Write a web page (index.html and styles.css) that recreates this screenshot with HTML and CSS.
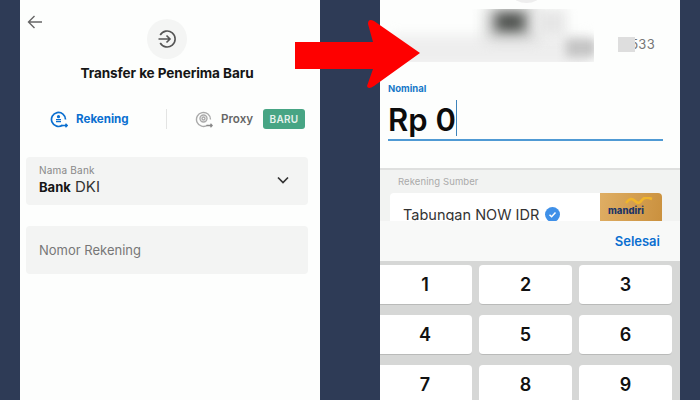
FILE: index.html
```html
<!DOCTYPE html>
<html lang="id">
<head>
<meta charset="utf-8">
<title>Transfer ke Penerima Baru</title>
<link rel="stylesheet" href="styles.css">
</head>
<body>
<main class="stage">
  <section class="phone left">
    <header class="top">
      <svg class="back" width="16" height="14" viewBox="0 0 16 14"><path d="M15 7H1.500M7.500 1 1.500 7l6 6" fill="none" stroke="#666" stroke-width="1.400"/></svg>
      <div class="round">
        <svg width="20" height="20" viewBox="0 0 20 20" fill="none" stroke="#555" stroke-width="1.600"><path d="M3.200 6A8 8 0 1 1 3.200 14"/><path d="M1.500 10H13M9.500 6.500 13 10l-3.500 3.500"/></svg>
      </div>
      <h1 class="title">Transfer ke Penerima Baru</h1>
    </header>
    <nav class="tabs">
      <div class="tab active">
        <svg width="18" height="18" viewBox="0 0 18 18" fill="none" stroke="#0a6fd0" stroke-width="1.700"><path d="M12.500 15.200A7 7 0 1 1 15.500 9.500"/><path d="M6 11.700h5M6 9.700h5" stroke-width="1.300"/><circle cx="8.500" cy="6.700" r="1.600" fill="#0a6fd0" stroke="none"/><path d="M11.500 15.500h5.500M15.500 13.800 17.200 15.500l-1.700 1.700" stroke-width="1.400"/></svg>
        <span>Rekening</span>
      </div>
      <span class="divider"></span>
      <div class="tab muted">
        <svg width="18" height="18" viewBox="0 0 18 18" fill="none" stroke="#aaa" stroke-width="1.400"><path d="M12.500 15.200A7 7 0 1 1 15.500 9.500"/><circle cx="8.500" cy="8.500" r="3.500"/><circle cx="8.500" cy="8.500" r="1.500"/><path d="M11.500 15.500h5.500M15.500 13.800 17.200 15.500l-1.700 1.700" stroke="#888" stroke-width="1.300"/></svg>
        <span>Proxy</span>
        <b class="badge">BARU</b>
      </div>
    </nav>
    <div class="field select">
      <div>
        <div class="field-label">Nama Bank</div>
        <div class="field-value"><strong>Bank</strong> DKI</div>
      </div>
      <svg width="12" height="8" viewBox="0 0 12 8"><path d="M1 1.500 6 6.500l5-5" fill="none" stroke="#333" stroke-width="1.700"/></svg>
    </div>
    <div class="field input">Nomor Rekening</div>
  </section>

  <section class="phone right">
    <div class="account"><span class="acc-no">533</span></div>
    <div class="amount">
      <div class="amount-label">Nominal</div>
      <div class="amount-value"><span>Rp 0</span><i class="caret"></i></div>
    </div>
    <div class="source">
      <div class="source-label">Rekening Sumber</div>
      <div class="card">
        <div class="card-name">Tabungan NOW IDR
          <svg width="15" height="15" viewBox="0 0 15 15"><circle cx="7.500" cy="7.500" r="7.500" fill="#3f90e8"/><path d="M4.500 7.700 6.600 9.700 10.500 5.500" fill="none" stroke="#fff" stroke-width="1.500"/></svg>
        </div>
        <div class="card-thumb">
          <svg class="wave" width="28" height="8" viewBox="0 0 28 8"><path d="M1 6c4-5 6-5 9-2s5 2 7-1 5-3 10-1" fill="none" stroke="#f0b52c" stroke-width="2.500"/></svg>
          <span>mandiri</span>
        </div>
      </div>
    </div>
    <div class="toolbar"><span>Selesai</span></div>
    <div class="keys">
      <div class="key">1</div><div class="key">2</div><div class="key">3</div>
      <div class="key">4</div><div class="key">5</div><div class="key">6</div>
      <div class="key">7</div><div class="key">8</div><div class="key">9</div>
    </div>
    <div class="notch"></div>
    <div class="smudge">
      <div class="blur blur-band"></div>
      <div class="blur blur-mid"></div>
      <div class="blur blur-dark"></div>
      <div class="blur blur-light"></div>
      <div class="blur blur-blob"></div>
    </div>
    <div class="patch"></div>
  </section>

  <svg class="arrow" width="125" height="70" viewBox="0 0 125 70"><path d="M0 22H78L73 4Q73 -2 79 1L125 33 79 66Q73 70 72 66L78 49H0Z" fill="#fe0000"/></svg>
</main>
</body>
</html>
```

FILE: styles.css
```css
* { box-sizing: border-box; }
html, body { margin: 0; height: 100%; }
body { background: #2e3b56; font-family: Inter, "Liberation Sans", sans-serif; overflow: hidden; }
.stage { position: relative; width: 700px; height: 400px; display: flex; padding: 0 20px; gap: 60px; }
.phone { width: 300px; height: 400px; background: #fdfefd; overflow: hidden; position: relative; flex: none; }

.left { display: flex; flex-direction: column; padding: 0 12px 0 6px; }
.top { position: relative; display: flex; flex-direction: column; align-items: center; padding: 19px 0 0 0; }
.back { position: absolute; left: 1px; top: 15px; }
.round { width: 40px; height: 40px; border-radius: 50%; background: #f4f5f4; display: flex; align-items: center; justify-content: center; }
.title { margin: 6px 0 0; font-size: 13.600px; line-height: 16px; font-weight: 700; color: #161616; letter-spacing: -0.100px; }
.tabs { display: flex; align-items: center; margin-top: 26px; height: 24px; padding-left: 24px; }
.tab { display: flex; align-items: center; font-size: 11.600px; font-weight: 700; }
.tab svg { margin-right: 8px; }
.active { color: #0a6fd0; width: 116px; flex: none; }
.divider { width: 1px; height: 20px; background: #e3e4e3; margin-right: 28px; flex: none; }
.muted { color: #666; font-weight: 600; }
.badge { margin-left: 10px; background: #47a584; color: #e4f2ec; font-size: 10px; font-weight: 600; letter-spacing: 0.300px; width: 42px; height: 20px; border-radius: 3px; display: flex; align-items: center; justify-content: center; }
.field { background: #f3f4f3; border-radius: 4px; flex: none; }
.select { margin-top: 26px; height: 48px; padding: 7px 19px 0 13px; display: flex; justify-content: space-between; align-items: flex-start; }
.select svg { margin-top: 12px; }
.field-label { font-size: 10px; line-height: 12px; color: #888; letter-spacing: 0.200px; }
.field-value { font-size: 15px; line-height: 20px; color: #333; margin-top: 1px; }
.field-value strong { font-size: 13px; color: #151515; }
.input { margin-top: 21px; height: 48px; padding-left: 13px; display: flex; align-items: center; font-size: 13px; color: #777; }

.right { display: flex; flex-direction: column; }
.right > * { flex: none; }
.account { height: 83px; display: flex; justify-content: flex-end; align-items: flex-start; padding: 36px 25px 0 0; }
.acc-no { font-size: 13px; line-height: 16px; color: #777; letter-spacing: 0.300px; }
.amount { height: 85px; padding: 0 17px 0 8px; }
.amount-label { font-size: 9.500px; line-height: 12px; font-weight: 700; color: #1778c8; }
.amount-value { display: flex; align-items: center; height: 41px; margin-top: 5px; border-bottom: 2px solid #4f9ad4; font-size: 31px; font-weight: 600; color: #0c0c0c; }
.amount-value span { line-height: 36px; margin-top: 1px; }
.caret { display: block; width: 1.500px; height: 36px; margin-top: -3px; background: #3e84bb; }
.source { height: 53px; background: #f2f3f2; border-top: 2px solid #dfe0df; padding: 6px 18px 0 10px; overflow: hidden; }
.source-label { font-size: 9.500px; line-height: 12px; color: #aaa; letter-spacing: 0.100px; margin-left: 8px; }
.card { margin-top: 5px; height: 50px; background: #fff; border-radius: 4px; display: flex; justify-content: space-between; }
.card-name { padding: 13px 0 0 13px; font-size: 14.500px; line-height: 18px; color: #333; display: flex; align-items: flex-start; gap: 6px; }
.card-name svg { margin-top: 1px; }
.card-thumb { position: relative; width: 62px; background: linear-gradient(100deg, #dfae64, #c98f3c); border-radius: 0 4px 4px 0; padding: 11px 0 0 8px; font-size: 9.500px; line-height: 13px; font-weight: 800; color: #1d3566; }
.wave { position: absolute; left: 25px; top: 4px; }
.toolbar { height: 40px; background: #f8f9f8; display: flex; align-items: center; justify-content: flex-end; padding: 0 20px 0 0; color: #0a6fd0; font-size: 13px; font-weight: 600; position: relative; }
.keys { flex: 1 0 auto; height: 139px; width: 310px; background: #d6d7d6; display: grid; grid-template-columns: 102px 93px 93px; grid-auto-rows: 40px; gap: 10px 7px; padding: 4px 8px 0 0; margin-left: -10px; }
.key { background: #fff; border-radius: 4px; border-bottom: 1px solid #b9bab9; display: flex; align-items: center; justify-content: center; font-size: 18px; font-weight: 600; color: #111; }
.key:nth-child(3n+1) { padding-left: 8px; }

.notch { position: absolute; left: 133px; top: -12px; width: 27px; height: 15px; border-radius: 50%; background: #eeeeee; }
.smudge { position: absolute; left: 10px; top: 9px; width: 204px; height: 53px; overflow: hidden; }
.blur { position: absolute; }
.blur-band { left: 0; top: 26px; width: 200px; height: 32px; background: #eeeeee; filter: blur(6px); }
.blur-mid { left: 96px; top: -2px; width: 50px; height: 32px; background: #c2c3c2; filter: blur(7px); }
.blur-dark { left: 106px; top: 4px; width: 28px; height: 18px; background: #4e514e; filter: blur(6px); }
.blur-light { left: 146px; top: 0; width: 30px; height: 28px; background: #e6e6e6; filter: blur(6px); }
.blur-blob { left: 176px; top: 30px; width: 30px; height: 18px; background: #c4c4c4; filter: blur(5px); }
.patch { position: absolute; left: 238px; top: 37px; width: 17px; height: 15px; background: #dedede; }

.arrow { position: absolute; left: 295px; top: 20px; }
```
